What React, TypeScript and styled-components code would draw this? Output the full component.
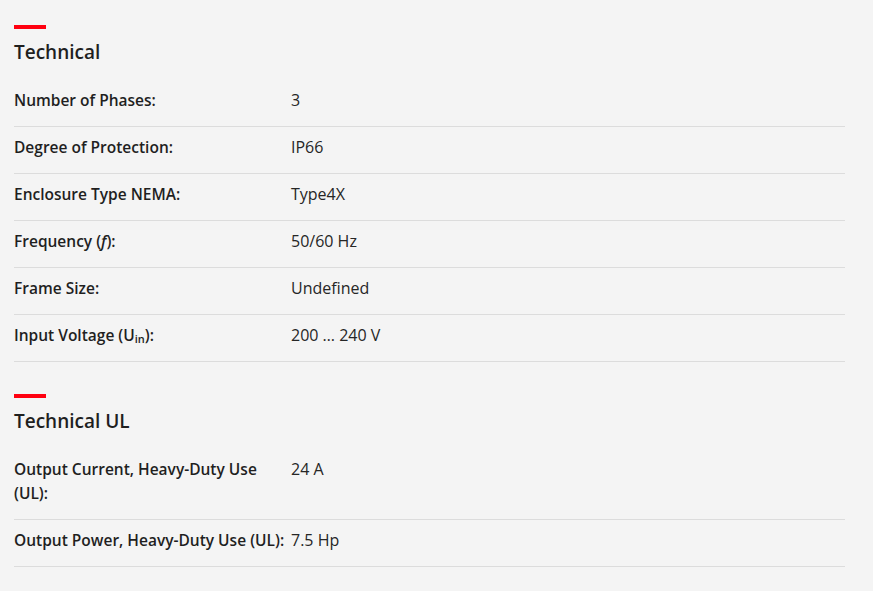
import React from "react";
import styled, { createGlobalStyle } from "styled-components";

const Global = createGlobalStyle`
  html, body { margin: 0; padding: 0; background: #f4f4f4; }
  body { font-family: "Open Sans", "Noto Sans", sans-serif; color: #1f1f1f; }
`;

const Page = styled.div`
  padding: 25px 28px 20px 14px;
  display: flex;
  flex-direction: column;
  gap: 32px;
`;

const Section = styled.section`
  display: flex;
  flex-direction: column;
`;

const Accent = styled.div`
  width: 32px;
  height: 4px;
  background: #ff000f;
`;

const Heading = styled.h2`
  margin: 9px 0 14px;
  font-size: 19px;
  line-height: 28px;
  font-weight: 600;
  color: #1f1f1f;
`;

const Row = styled.div`
  display: grid;
  grid-template-columns: 277px 1fr;
  padding: 8px 0 14px;
  border-bottom: 1px solid #dcdcdc;
  line-height: 24px;
`;

const Label = styled.div`
  font-size: 15.5px;
  font-weight: 600;
  color: #1f1f1f;
`;

const Value = styled.div`
  font-size: 16px;
  font-weight: 400;
  color: #262626;
`;

const Sub = styled.sub`
  font-size: 11px;
  line-height: 0;
  vertical-align: -2px;
`;

type Item = { label: React.ReactNode; value: string };

const technical: Item[] = [
  { label: "Number of Phases:", value: "3" },
  { label: "Degree of Protection:", value: "IP66" },
  { label: "Enclosure Type NEMA:", value: "Type4X" },
  { label: <>Frequency (<i>f</i>):</>, value: "50/60 Hz" },
  { label: "Frame Size:", value: "Undefined" },
  { label: <>Input Voltage (U<Sub>in</Sub>):</>, value: "200 … 240 V" },
];

const technicalUL: Item[] = [
  { label: "Output Current, Heavy-Duty Use (UL):", value: "24 A" },
  { label: "Output Power, Heavy-Duty Use (UL):", value: "7.5 Hp" },
];

const Block = ({ title, items }: { title: string; items: Item[] }) => (
  <Section>
    <Accent />
    <Heading>{title}</Heading>
    {items.map((it, i) => (
      <Row key={i}>
        <Label>{it.label}</Label>
        <Value>{it.value}</Value>
      </Row>
    ))}
  </Section>
);

export default function App() {
  return (
    <>
      <Global />
      <Page>
        <Block title="Technical" items={technical} />
        <Block title="Technical UL" items={technicalUL} />
      </Page>
    </>
  );
}
